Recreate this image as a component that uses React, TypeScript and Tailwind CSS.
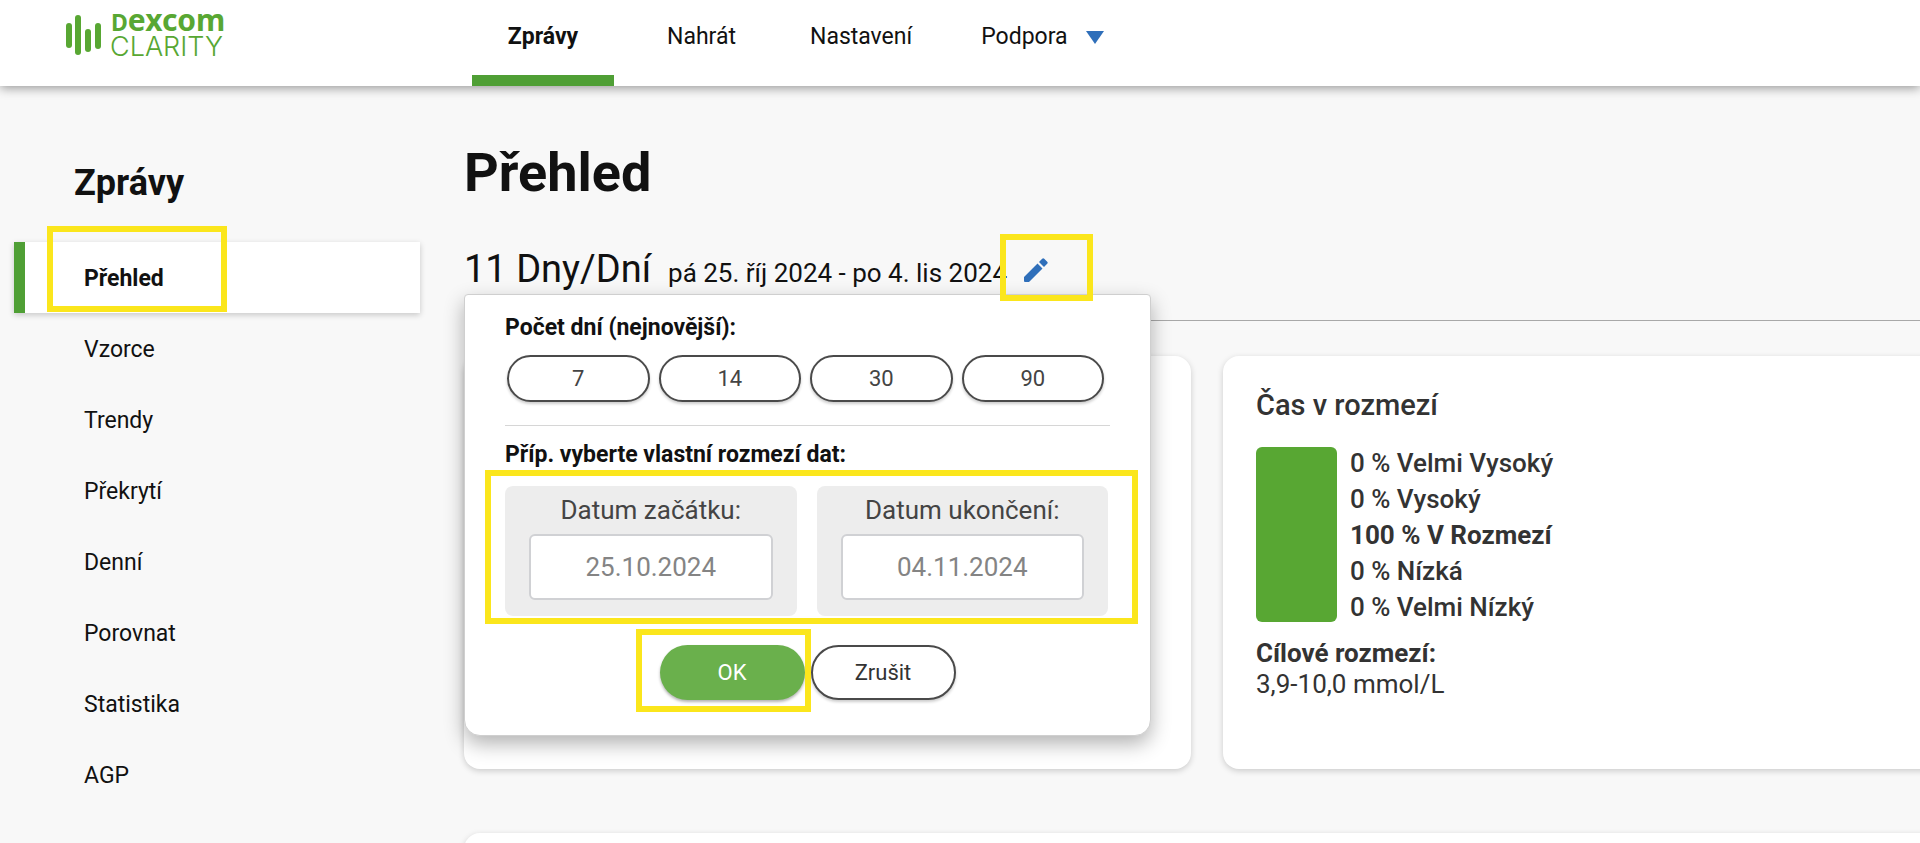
import { useState, type ReactNode } from "react";
import clsx from "clsx";

const reports = [
  "Přehled",
  "Vzorce",
  "Trendy",
  "Překrytí",
  "Denní",
  "Porovnat",
  "Statistika",
  "AGP",
];

const presets = [7, 14, 30, 90];

const ranges = [
  { label: "0 % Velmi Vysoký", inRange: false },
  { label: "0 % Vysoký", inRange: false },
  { label: "100 % V Rozmezí", inRange: true },
  { label: "0 % Nízká", inRange: false },
  { label: "0 % Velmi Nízký", inRange: false },
];

// yellow frame around the step described in the guide
function Highlight({ className }: { className: string }) {
  return (
    <div
      aria-hidden="true"
      className={clsx(
        "pointer-events-none absolute border-[6px] border-[#fbe61c]",
        className
      )}
    />
  );
}

function Logo() {
  return (
    <svg
      width="180"
      height="72"
      viewBox="0 0 180 72"
      fill="#58a733"
      role="img"
      aria-label="Dexcom Clarity"
    >
      <rect x="0" y="23" width="6" height="25" rx="3" />
      <rect x="9" y="15" width="6" height="40" rx="3" />
      <rect x="19" y="29" width="6" height="23" rx="3" />
      <rect x="29" y="23" width="6" height="26" rx="3" />
      <text
        x="45"
        y="31"
        fontFamily="'Noto Sans', sans-serif"
        fontWeight="700"
      >
        <tspan fontSize="23">D</tspan>
        <tspan fontSize="30">excom</tspan>
      </text>
      <text
        x="44"
        y="56"
        fontFamily="Inter, sans-serif"
        fontWeight="300"
        fontSize="27"
      >
        CLARITY
      </text>
    </svg>
  );
}

function Header() {
  return (
    <header className="relative z-10 flex h-[86px] items-start bg-white pl-[66px] shadow-[0_2px_10px_rgba(0,0,0,0.4)]">
      <a href="#" className="w-[406px]">
        <Logo />
      </a>
      <nav className="flex h-full text-[23px] leading-[26px]">
        <a
          href="#"
          className="flex w-[142px] justify-center border-b-[11px] border-[#4f9f35] pt-6 font-bold"
        >
          Zprávy
        </a>
        <a href="#" className="ml-[53px] pt-6">
          Nahrát
        </a>
        <a href="#" className="ml-[74px] pt-6">
          Nastavení
        </a>
        <a href="#" className="ml-[69px] flex gap-[18px] pt-6">
          Podpora
          <svg width="18" height="13" viewBox="0 0 18 13" className="mt-[7px]">
            <path d="M0 0h18L9 13z" fill="#2f6fba" />
          </svg>
        </a>
      </nav>
    </header>
  );
}

function Sidebar() {
  return (
    <aside className="w-[464px] shrink-0 pt-[74px] pl-[14px]">
      <h2 className="pl-[60px] text-[36px] leading-[46px] font-bold">Zprávy</h2>
      <ul className="relative mt-9 w-[406px] text-[23px]">
        {reports.map((name, i) => (
          <li key={name}>
            <a
              href="#"
              className={clsx(
                "flex h-[71px] items-center border-l-[11px] pt-1 pl-[59px]",
                i === 0
                  ? "border-[#4f9f35] bg-white font-bold shadow-[0_2px_6px_rgba(0,0,0,0.2)]"
                  : "border-transparent"
              )}
            >
              {name}
            </a>
          </li>
        ))}
        <Highlight className="-top-4 left-[33px] h-[86px] w-[180px]" />
      </ul>
    </aside>
  );
}

function DateField({
  id,
  label,
  value,
  onChange,
}: {
  id: string;
  label: string;
  value: string;
  onChange: (value: string) => void;
}) {
  return (
    <div className="flex-1 rounded-lg bg-[#ededed] px-6 pt-1.5 pb-4 text-center text-[26px]">
      <label htmlFor={id} className="block pb-1.5 leading-9 text-[#444]">
        {label}
      </label>
      <input
        id={id}
        type="text"
        value={value}
        onChange={(e) => onChange(e.target.value)}
        className="h-[66px] w-full rounded-md border-2 border-[#d0d1d4] bg-white text-center text-[#848484]"
      />
    </div>
  );
}

function DateRangePopup() {
  const [start, setStart] = useState("25.10.2024");
  const [end, setEnd] = useState("04.11.2024");

  return (
    <div
      role="dialog"
      aria-label="Rozmezí dat"
      className="absolute top-[208px] left-0 w-[687px] rounded-t-sm rounded-b-2xl border border-[#cfcfcf] bg-white px-10 pt-5 pb-[35px] shadow-[0_8px_20px_rgba(0,0,0,0.3)]"
    >
      <p className="text-[23px] leading-[26px] font-bold">
        Počet dní (nejnovější):
      </p>
      <div className="mt-[14px] flex gap-[9px] pr-1.5 pl-0.5">
        {presets.map((days) => (
          <button
            key={days}
            type="button"
            className="h-[47px] flex-1 rounded-full border-2 border-[#4a4a4a] bg-white text-[22px] text-[#444] shadow-[0_2px_3px_rgba(0,0,0,0.2)]"
          >
            {days}
          </button>
        ))}
      </div>
      <hr className="mt-[23px] border-[#d6d6d6]" />
      <p className="mt-4 text-[23px] leading-[26px] font-bold">
        Příp. vyberte vlastní rozmezí dat:
      </p>
      <div className="relative mt-[18px] flex gap-5 pr-0.5">
        <DateField
          id="start"
          label="Datum začátku:"
          value={start}
          onChange={setStart}
        />
        <DateField
          id="end"
          label="Datum ukončení:"
          value={end}
          onChange={setEnd}
        />
        <Highlight className="-top-4 -right-7 -bottom-2 -left-5" />
      </div>
      <div className="mt-[29px] flex justify-center gap-1.5 text-[22px]">
        <div className="relative">
          <button
            type="button"
            className="h-[55px] w-[145px] rounded-full bg-[#6ab04c] text-white shadow-[0_2px_3px_rgba(0,0,0,0.3)]"
          >
            OK
          </button>
          <Highlight className="-top-4 -right-1.5 -bottom-3 -left-6" />
        </div>
        <button
          type="button"
          className="h-[55px] w-[145px] rounded-full border-2 border-[#4a4a4a] bg-white text-[#333] shadow-[0_2px_3px_rgba(0,0,0,0.2)]"
        >
          Zrušit
        </button>
      </div>
    </div>
  );
}

function Card({ children }: { children?: ReactNode }) {
  return (
    <section className="min-h-[413px] rounded-2xl bg-white px-[33px] pt-7 shadow-[0_2px_6px_rgba(0,0,0,0.18)]">
      {children}
    </section>
  );
}

function TimeInRange() {
  return (
    <Card>
      <h3 className="text-[29px] leading-[42px] font-medium">Čas v rozmezí</h3>
      <div className="mt-[21px] flex h-[175px] items-center gap-[13px]">
        <div className="h-full w-[81px] rounded-md bg-[#58a733]" />
        <ul className="text-[26px] leading-9 font-medium">
          {ranges.map((range) => (
            <li
              key={range.label}
              className={range.inRange ? "font-bold" : undefined}
            >
              {range.label}
            </li>
          ))}
        </ul>
      </div>
      <p className="mt-4 text-[26px] leading-[31px] font-bold">
        Cílové rozmezí:
      </p>
      <p className="text-[26px] leading-[31px]">3,9-10,0 mmol/L</p>
    </Card>
  );
}

export default function App() {
  return (
    <div className="min-h-screen overflow-hidden bg-[#f8f8f8] font-['Roboto',sans-serif] text-[#111]">
      <Header />
      <div className="flex">
        <Sidebar />
        <main className="relative -mr-[30px] min-w-0 flex-1">
          <h1 className="pt-[51px] text-[54px] leading-[72px] font-bold">
            Přehled
          </h1>
          <div className="flex items-baseline gap-[17px] border-b border-[#a8a8a8] pt-[37px] pb-[27px]">
            <span className="text-[38px] leading-[46px]">11 Dny/Dní</span>
            <span className="text-[26px]">pá 25. říj 2024 - po 4. lis 2024</span>
            <button
              type="button"
              aria-label="Upravit rozmezí dat"
              className="relative z-10"
            >
              <svg width="24" height="24" viewBox="0 0 24 24" fill="#2f6fba">
                <path d="M0 19v4q0 1 1 1h4L18.500 10.500l-5-5zM15 4l5 5 3.200-3.200q1-1 0-2L20.200.8q-1-1-2 0z" />
              </svg>
              <Highlight className="-top-6 -left-6 h-[67px] w-[93px]" />
            </button>
          </div>
          <div className="mt-[35px] grid grid-cols-2 gap-8 text-[#333]">
            <Card />
            <TimeInRange />
          </div>
          {/* next row of cards starts at the fold */}
          <div className="-mb-[402px] pt-16">
            <Card />
          </div>
          <DateRangePopup />
        </main>
      </div>
    </div>
  );
}
